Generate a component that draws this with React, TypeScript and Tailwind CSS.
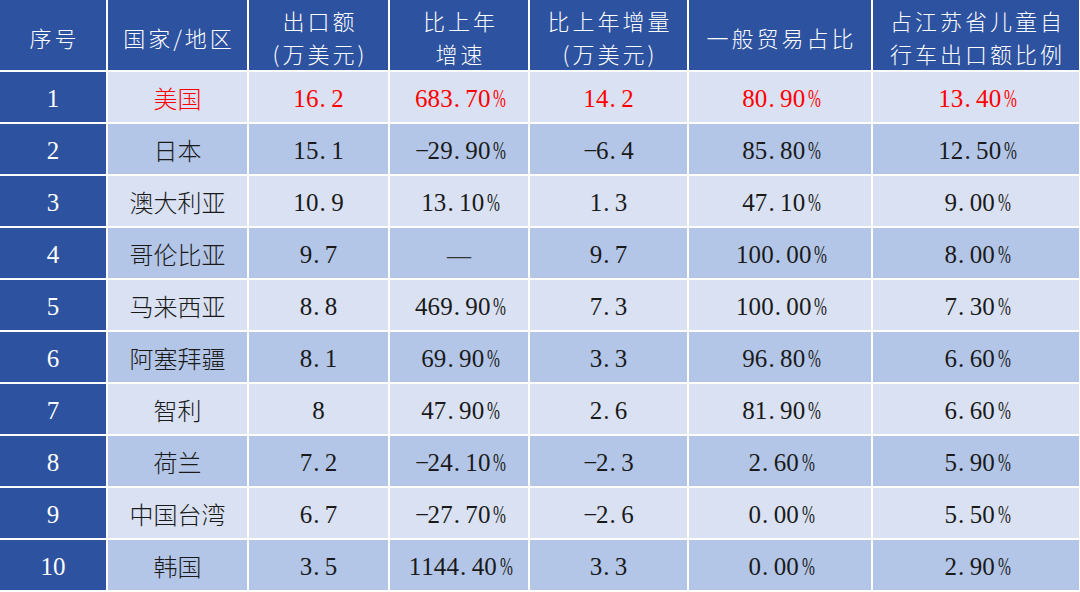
import React from "react";

const rows: string[][] = [
  ["1", "美国", "16.2", "683.70%", "14.2", "80.90%", "13.40%"],
  ["2", "日本", "15.1", "-29.90%", "-6.4", "85.80%", "12.50%"],
  ["3", "澳大利亚", "10.9", "13.10%", "1.3", "47.10%", "9.00%"],
  ["4", "哥伦比亚", "9.7", "—", "9.7", "100.00%", "8.00%"],
  ["5", "马来西亚", "8.8", "469.90%", "7.3", "100.00%", "7.30%"],
  ["6", "阿塞拜疆", "8.1", "69.90%", "3.3", "96.80%", "6.60%"],
  ["7", "智利", "8", "47.90%", "2.6", "81.90%", "6.60%"],
  ["8", "荷兰", "7.2", "-24.10%", "-2.3", "2.60%", "5.90%"],
  ["9", "中国台湾", "6.7", "-27.70%", "-2.6", "0.00%", "5.50%"],
  ["10", "韩国", "3.5", "1144.40%", "3.3", "0.00%", "2.90%"],
];

const headers: string[][] = [
  ["序号"],
  ["国家/地区"],
  ["出口额", "(万美元)"],
  ["比上年", "增速"],
  ["比上年增量", "(万美元)"],
  ["一般贸易占比"],
  ["占江苏省儿童自", "行车出口额比例"],
];

function Num({ value }: { value: string }) {
  if (value === "—") {
    return (
      <span className="font-['Liberation_Serif','DejaVu_Serif',serif] text-[24px] leading-none text-[#333]">
        —
      </span>
    );
  }
  return (
    <span className="inline-flex items-baseline font-['Liberation_Serif','DejaVu_Serif',serif] text-[25px] leading-none">
      {value.split("").map((c, i) => {
        if (c === ".") {
          return (
            <span key={i} className="inline-block w-[12.6px] text-left pl-[1px]">
              .
            </span>
          );
        }
        if (c === "%") {
          return (
            <span key={i} className="inline-block w-[12.6px] text-center">
              <span className="inline-block scale-x-[0.62] -translate-x-[1px]">%</span>
            </span>
          );
        }
        if (c === "-") {
          return (
            <span key={i} className="inline-block w-[12.6px] text-center">
              −
            </span>
          );
        }
        return (
          <span key={i} className="inline-block w-[12.6px] text-center">
            {c}
          </span>
        );
      })}
    </span>
  );
}

export default function App() {
  return (
    <div className="w-[1080px] h-[592px] bg-white">
      <div className="grid grid-cols-[106px_139px_139px_138px_157px_182px_206px] grid-rows-[70px_repeat(10,50px)] gap-[2px] bg-white">
        {headers.map((h, i) => (
          <div
            key={"h" + i}
            className="bg-[#2D529F] text-white flex flex-col items-center justify-center pt-[4px] font-['Noto_Sans_CJK_SC',sans-serif] font-light text-[22px] leading-[33px] tracking-[3px]"
          >
            {h.map((line, j) => (
              <div key={j} className="pl-[3px]">
                {line}
              </div>
            ))}
          </div>
        ))}
        {rows.map((r, ri) => {
          const bg = ri % 2 === 0 ? "bg-[#D9E1F2]" : "bg-[#B4C6E7]";
          const red = ri === 0;
          return r.map((cell, ci) => {
            if (ci === 0) {
              return (
                <div
                  key={ri + "-" + ci}
                  className="bg-[#2D529F] text-white flex items-center justify-center pt-[3px]"
                >
                  <Num value={cell} />
                </div>
              );
            }
            const color = red ? "text-[#FF0000]" : "text-[#1a1a1a]";
            if (ci === 1) {
              return (
                <div
                  key={ri + "-" + ci}
                  className={`${bg} ${color} flex items-center justify-center pt-[1px] font-['Noto_Sans_CJK_SC',sans-serif] font-light text-[24px] leading-none`}
                >
                  {cell}
                </div>
              );
            }
            return (
              <div
                key={ri + "-" + ci}
                className={`${bg} ${color} flex items-center justify-center pt-[3px]`}
              >
                <Num value={cell} />
              </div>
            );
          });
        })}
      </div>
    </div>
  );
}
